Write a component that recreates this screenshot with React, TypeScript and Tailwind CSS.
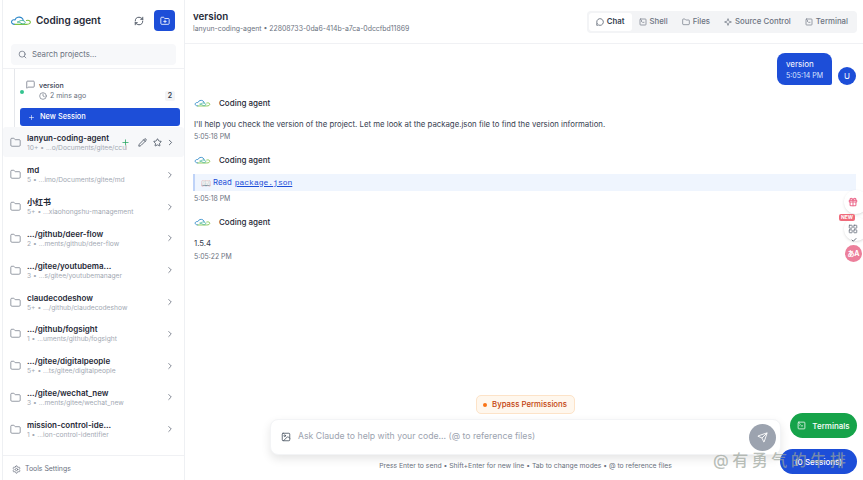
import React from 'react';
import {
  Check, ChevronRight, Clock, Folder, FolderPlus, Gift, Image, LayoutGrid, MessageCircle, MessageSquare,
  Pencil, Plus, RefreshCw, Search, Send, Settings, Sparkle, SquareTerminal, Star,
} from 'lucide-react';

const font = { fontFamily: 'Inter, "Noto Sans CJK SC", sans-serif' };

const projects = [
  { name: 'md', count: '5', path: '...imo/Documents/gitee/md' },
  { name: '小红书', count: '5+', path: '...xiaohongshu-management' },
  { name: '.../github/deer-flow', count: '2', path: '...ments/github/deer-flow' },
  { name: '.../gitee/youtubema...', count: '3', path: '...s/gitee/youtubemanager' },
  { name: 'claudecodeshow', count: '5+', path: '.../github/claudecodeshow' },
  { name: '.../github/fogsight', count: '1', path: '...uments/github/fogsight' },
  { name: '.../gitee/digitalpeople', count: '5+', path: '...ts/gitee/digitalpeople' },
  { name: '.../gitee/wechat_new', count: '3', path: '...ments/gitee/wechat_new' },
  { name: 'mission-control-ide...', count: '1', path: '...ion-control-identifier' },
];

const tabs = [
  { label: 'Chat', icon: MessageCircle, active: true },
  { label: 'Shell', icon: SquareTerminal },
  { label: 'Files', icon: Folder },
  { label: 'Source Control', icon: Sparkle },
  { label: 'Terminal', icon: SquareTerminal },
];

const Logo = ({ className }: { className: string }) => (
  <svg viewBox="0 0 40 20" fill="none" className={className}>
    <path d="M9 17C4 17 2 14 3 11.500C4 9 7 8.500 9 9C11 4 17 2.500 21 5C23 6.500 24 8 24 10" stroke="#2a86c8" strokeWidth="2" strokeLinecap="round" />
    <path d="M9 17H30C35 17 37.500 15 37 12.500C36.500 10 33 9 30 10" stroke="#7cc242" strokeWidth="2" strokeLinecap="round" />
    <path d="M14 14C17 9 24 9 27 12C29 14.500 26 17 22 16C19 15 17 12 14 12" stroke="#46b59a" strokeWidth="1.800" strokeLinecap="round" />
  </svg>
);

const ProjectRow = ({ name, count, path }: { name: string; count: string; path: string }) => (
  <div className="flex h-[31.800px] items-center pl-[8px] pr-[9px]">
    <Folder className="h-[9px] w-[9px] shrink-0 scale-125 text-[#6b7280]" strokeWidth={1.500} />
    <div className="ml-[7px] min-w-0 flex-1">
      <div className="truncate text-[8px] font-semibold leading-[12px] text-[#1f2937]">{name}</div>
      <div className="truncate text-[6.700px] leading-[9px] text-[#a3a9b3]">{count} • {path}</div>
    </div>
    <ChevronRight className="h-[10px] w-[10px] shrink-0 text-[#6b7280]" />
  </div>
);

const AgentHeader = () => (
  <div className="flex h-[12px] items-center">
    <Logo className="ml-[9px] h-[10px] w-[17px]" />
    <span className="ml-[8px] text-[8px] font-medium text-[#1f2937]">Coding agent</span>
  </div>
);

const Time = ({ children }: { children: string }) => (
  <div className="ml-[9px] text-[6.900px] leading-[10px] text-[#6b7280]">{children}</div>
);

export default function App() {
  return (
    <div style={font} className="relative flex h-[480px] w-[863px] overflow-hidden bg-white">
      {/* Sidebar */}
      <aside className="ml-[2px] flex h-full w-[183px] shrink-0 flex-col border-x border-[#eef0f3]">
        <div className="flex h-[40px] items-center pl-[7px] pr-[9px] pt-[1px]">
          <Logo className="h-[13px] w-[22px]" />
          <span className="ml-[4px] flex-1 text-[10px] font-semibold text-[#1f2937]">Coding agent</span>
          <RefreshCw className="mr-[10px] h-[10px] w-[10px] text-[#374151]" />
          <div className="flex h-[21px] w-[21px] items-center justify-center rounded-[4px] bg-[#1d4ed8]">
            <FolderPlus className="h-[10px] w-[10px] text-white" />
          </div>
        </div>
        <div className="h-[29px] border-b border-[#f0f1f4] px-[8px] pt-[4px]">
          <div className="flex h-[21px] items-center rounded-[4px] bg-[#f7f8fa] pl-[7px]">
            <Search className="h-[9px] w-[9px] text-[#6b7280]" />
            <span className="ml-[5px] text-[7.800px] text-[#6b7280]">Search projects...</span>
          </div>
        </div>
        <div className="ml-[11px] mr-[4px] h-[58px] border-l border-[#e5e7eb] pl-[5px] pt-[12px]">
          <div className="flex h-[26px] items-start">
            <span className="mt-[9px] h-[4px] w-[4px] rounded-full bg-[#34c38f]" />
            <MessageSquare className="ml-[2px] mt-[-1px] h-[9px] w-[9px] text-[#6b7280]" />
            <div className="ml-[4px] flex-1">
              <div className="text-[7px] font-medium leading-[9px] text-[#374151]">version</div>
              <div className="mt-[1px] flex items-center text-[7px] leading-[10px] text-[#6b7280]">
                <Clock className="mr-[3px] h-[8px] w-[8px]" />2 mins ago
                <span className="ml-auto mr-[5px] rounded-[2px] bg-[#f3f4f6] px-[3px] text-[7px] font-semibold text-[#374151]">2</span>
              </div>
            </div>
          </div>
          <div className="mt-[1px] flex h-[18px] items-center rounded-[3px] bg-[#1d4ed8] pl-[8px] text-white">
            <Plus className="h-[7px] w-[7px]" />
            <span className="ml-[5px] text-[7.400px] font-medium">New Session</span>
          </div>
        </div>
        <div className="flex h-[30px] items-center rounded-[3px] bg-[#f7f8fa] pl-[8px] pr-[9px]">
          <Folder className="h-[9px] w-[9px] shrink-0 scale-125 text-[#6b7280]" strokeWidth={1.500} />
          <div className="ml-[7px] w-[100px] min-w-0">
            <div className="truncate text-[8px] font-semibold leading-[12px] text-[#1f2937]">lanyun-coding-agent</div>
            <div className="w-[100px] overflow-hidden whitespace-nowrap text-[6.700px] leading-[9px] text-[#a3a9b3]">10+ • ...o/Documents/gitee/ccui</div>
          </div>
          <Plus className="-ml-[6px] h-[9px] w-[9px] shrink-0 text-[#22a45d]" />
          <Pencil className="ml-[8px] h-[9px] w-[9px] shrink-0 text-[#374151]" />
          <Star className="ml-[6px] h-[9px] w-[9px] shrink-0 text-[#374151]" />
          <ChevronRight className="ml-[4px] h-[9px] w-[9px] shrink-0 text-[#374151]" />
        </div>
        <div className="flex-1 pt-[2px]">
          {projects.map((p) => (
            <ProjectRow key={p.name} {...p} />
          ))}
        </div>
        <div className="flex h-[25px] items-center border-t border-[#f0f1f4] pl-[9px] pt-[3px]">
          <Settings className="h-[9px] w-[9px] text-[#6b7280]" />
          <span className="ml-[4px] text-[6.900px] text-[#6b7280]">Tools Settings</span>
        </div>
      </aside>

      {/* Main */}
      <main className="flex min-w-0 flex-1 flex-col">
        <header className="flex h-[44px] shrink-0 items-center justify-between border-b border-[#f0f1f4] pl-[8px] pr-[6px]">
          <div>
            <div className="text-[9.800px] font-semibold leading-[13px] text-[#1f2937]">version</div>
            <div className="mt-[1px] text-[6.900px] leading-[9px] text-[#6b7280]">lanyun-coding-agent • 22808733-0da6-414b-a7ca-0dccfbd11869</div>
          </div>
          <div className="flex h-[22px] items-center rounded-[4px] bg-[#f3f4f6] px-[2px]">
            {tabs.map((t) => (
              <div
                key={t.label}
                className={`flex h-[18px] items-center gap-[3px] rounded-[3px] px-[7px] text-[7.800px] ${t.active ? 'bg-white font-semibold text-[#374151]' : 'font-medium text-[#6b7280]'}`}
              >
                <t.icon className="h-[8px] w-[8px]" />
                {t.label}
              </div>
            ))}
          </div>
        </header>

        <div className="flex-1 overflow-hidden pr-[7px] pt-[9px]">
          <div className="flex items-end justify-end">
            <div className="flex h-[32px] w-[55px] flex-col justify-center rounded-[8px] rounded-br-[2px] bg-[#1d4ed8] pl-[9px] text-white">
              <div className="text-[8px] leading-[12px]">version</div>
              <div className="text-[7px] leading-[11px] text-[#dbe4ff]">5:05:14 PM</div>
            </div>
            <div className="ml-[6px] flex h-[18px] w-[18px] items-center justify-center rounded-full bg-[#1d4ed8] text-[8px] text-white">U</div>
          </div>

          <div className="mt-[12px]"><AgentHeader /></div>
          <div className="ml-[9px] mt-[9px] text-[7.800px] leading-[12px] text-[#374151]">
            I'll help you check the version of the project. Let me look at the package.json file to find the version information.
          </div>
          <div className="mt-[2px]"><Time>5:05:18 PM</Time></div>

          <div className="mt-[12px]"><AgentHeader /></div>
          <div className="ml-[8px] mt-[8px] flex h-[17px] items-center border-l-2 border-[#bfd3f8] bg-[#eff5fe] pl-[6px] text-[7.800px] text-[#1d4ed8]">
            <span className="mr-[2px] text-[8px]">📖</span>Read
            <span className="ml-[3px] font-['Liberation_Mono',monospace] text-[8px] underline">package.json</span>
          </div>
          <div className="mt-[3px]"><Time>5:05:18 PM</Time></div>

          <div className="mt-[12px]"><AgentHeader /></div>
          <div className="ml-[9px] mt-[9px] text-[7.800px] leading-[12px] text-[#374151]">1.5.4</div>
          <div className="mt-[3px]"><Time>5:05:22 PM</Time></div>
        </div>

        {/* Composer */}
        <div className="flex shrink-0 flex-col items-center pb-[10px] pl-[3px]">
          <div className="mr-[1px] flex h-[19px] w-[99px] items-center justify-center rounded-[5px] border border-[#fde3c8] bg-[#fff7ed] text-[7.800px] font-medium text-[#c2410c]">
            <span className="mr-[5px] h-[4px] w-[4px] rounded-full bg-[#f97316]" />Bypass Permissions
          </div>
          <div className="relative mt-[5px] flex h-[36px] w-[511px] items-center rounded-[8px] border border-[#f3f4f6] bg-white pl-[10px] shadow-[0_4px_10px_rgba(0,0,0,0.10)]">
            <Image className="h-[10px] w-[10px] text-[#4b5563]" />
            <span className="ml-[7px] text-[8.700px] text-[#9ca3af]">Ask Claude to help with your code... (@ to reference files)</span>
            <div className="absolute right-[4px] top-[4px] flex h-[27px] w-[27px] items-center justify-center rounded-full bg-[#9ca3af]">
              <Send className="h-[11px] w-[11px] text-white" />
            </div>
          </div>
          <div className="mt-[6px] text-[6.800px] leading-[9px] text-[#6b7280]">
            Press Enter to send • Shift+Enter for new line • Tab to change modes • @ to reference files
          </div>
        </div>
      </main>

      {/* Side widgets */}
      <div className="absolute left-[844px] top-[190px] flex h-[24px] w-[24px] items-center justify-center rounded-full bg-white shadow-sm">
        <Gift className="mr-[6px] h-[10px] w-[10px] text-[#ec6a8c]" strokeWidth={2.500} />
      </div>
      <div className="absolute left-[844px] top-[217px] flex h-[24px] w-[24px] items-center justify-center rounded-full bg-white shadow-sm">
        <LayoutGrid className="mr-[6px] h-[10px] w-[10px] text-[#6b7280]" />
      </div>
      <div className="absolute left-[839px] top-[214px] rounded-[2px] bg-[#ef6b7b] px-[2px] text-[5px] font-bold leading-[7px] text-white">NEW</div>
      <Check className="absolute left-[851px] top-[237px] h-[6px] w-[6px] text-[#374151]" strokeWidth={3} />
      <div className="absolute left-[845px] top-[245px] flex h-[17px] w-[17px] items-center justify-center rounded-full bg-[#ec7f9b] text-[7px] font-bold leading-none text-white">あA</div>

      {/* Floating buttons */}
      <div className="absolute left-[790px] top-[413px] flex h-[25px] w-[67px] items-center justify-center gap-[6px] rounded-full bg-[#16a34a] text-[8px] font-medium text-white">
        <SquareTerminal className="h-[9px] w-[9px]" />Terminals
      </div>
      <div className="absolute left-[780px] top-[449px] flex h-[25px] w-[77px] items-center justify-center rounded-full bg-[#1d4ed8] text-[8px] font-medium text-white">
        (0 Sessions)
      </div>
      <div className="absolute left-[713px] top-[448px] text-[16px] font-medium tracking-[3.500px] text-[#9aa39a]/70">@有勇气的牛排</div>
    </div>
  );
}
